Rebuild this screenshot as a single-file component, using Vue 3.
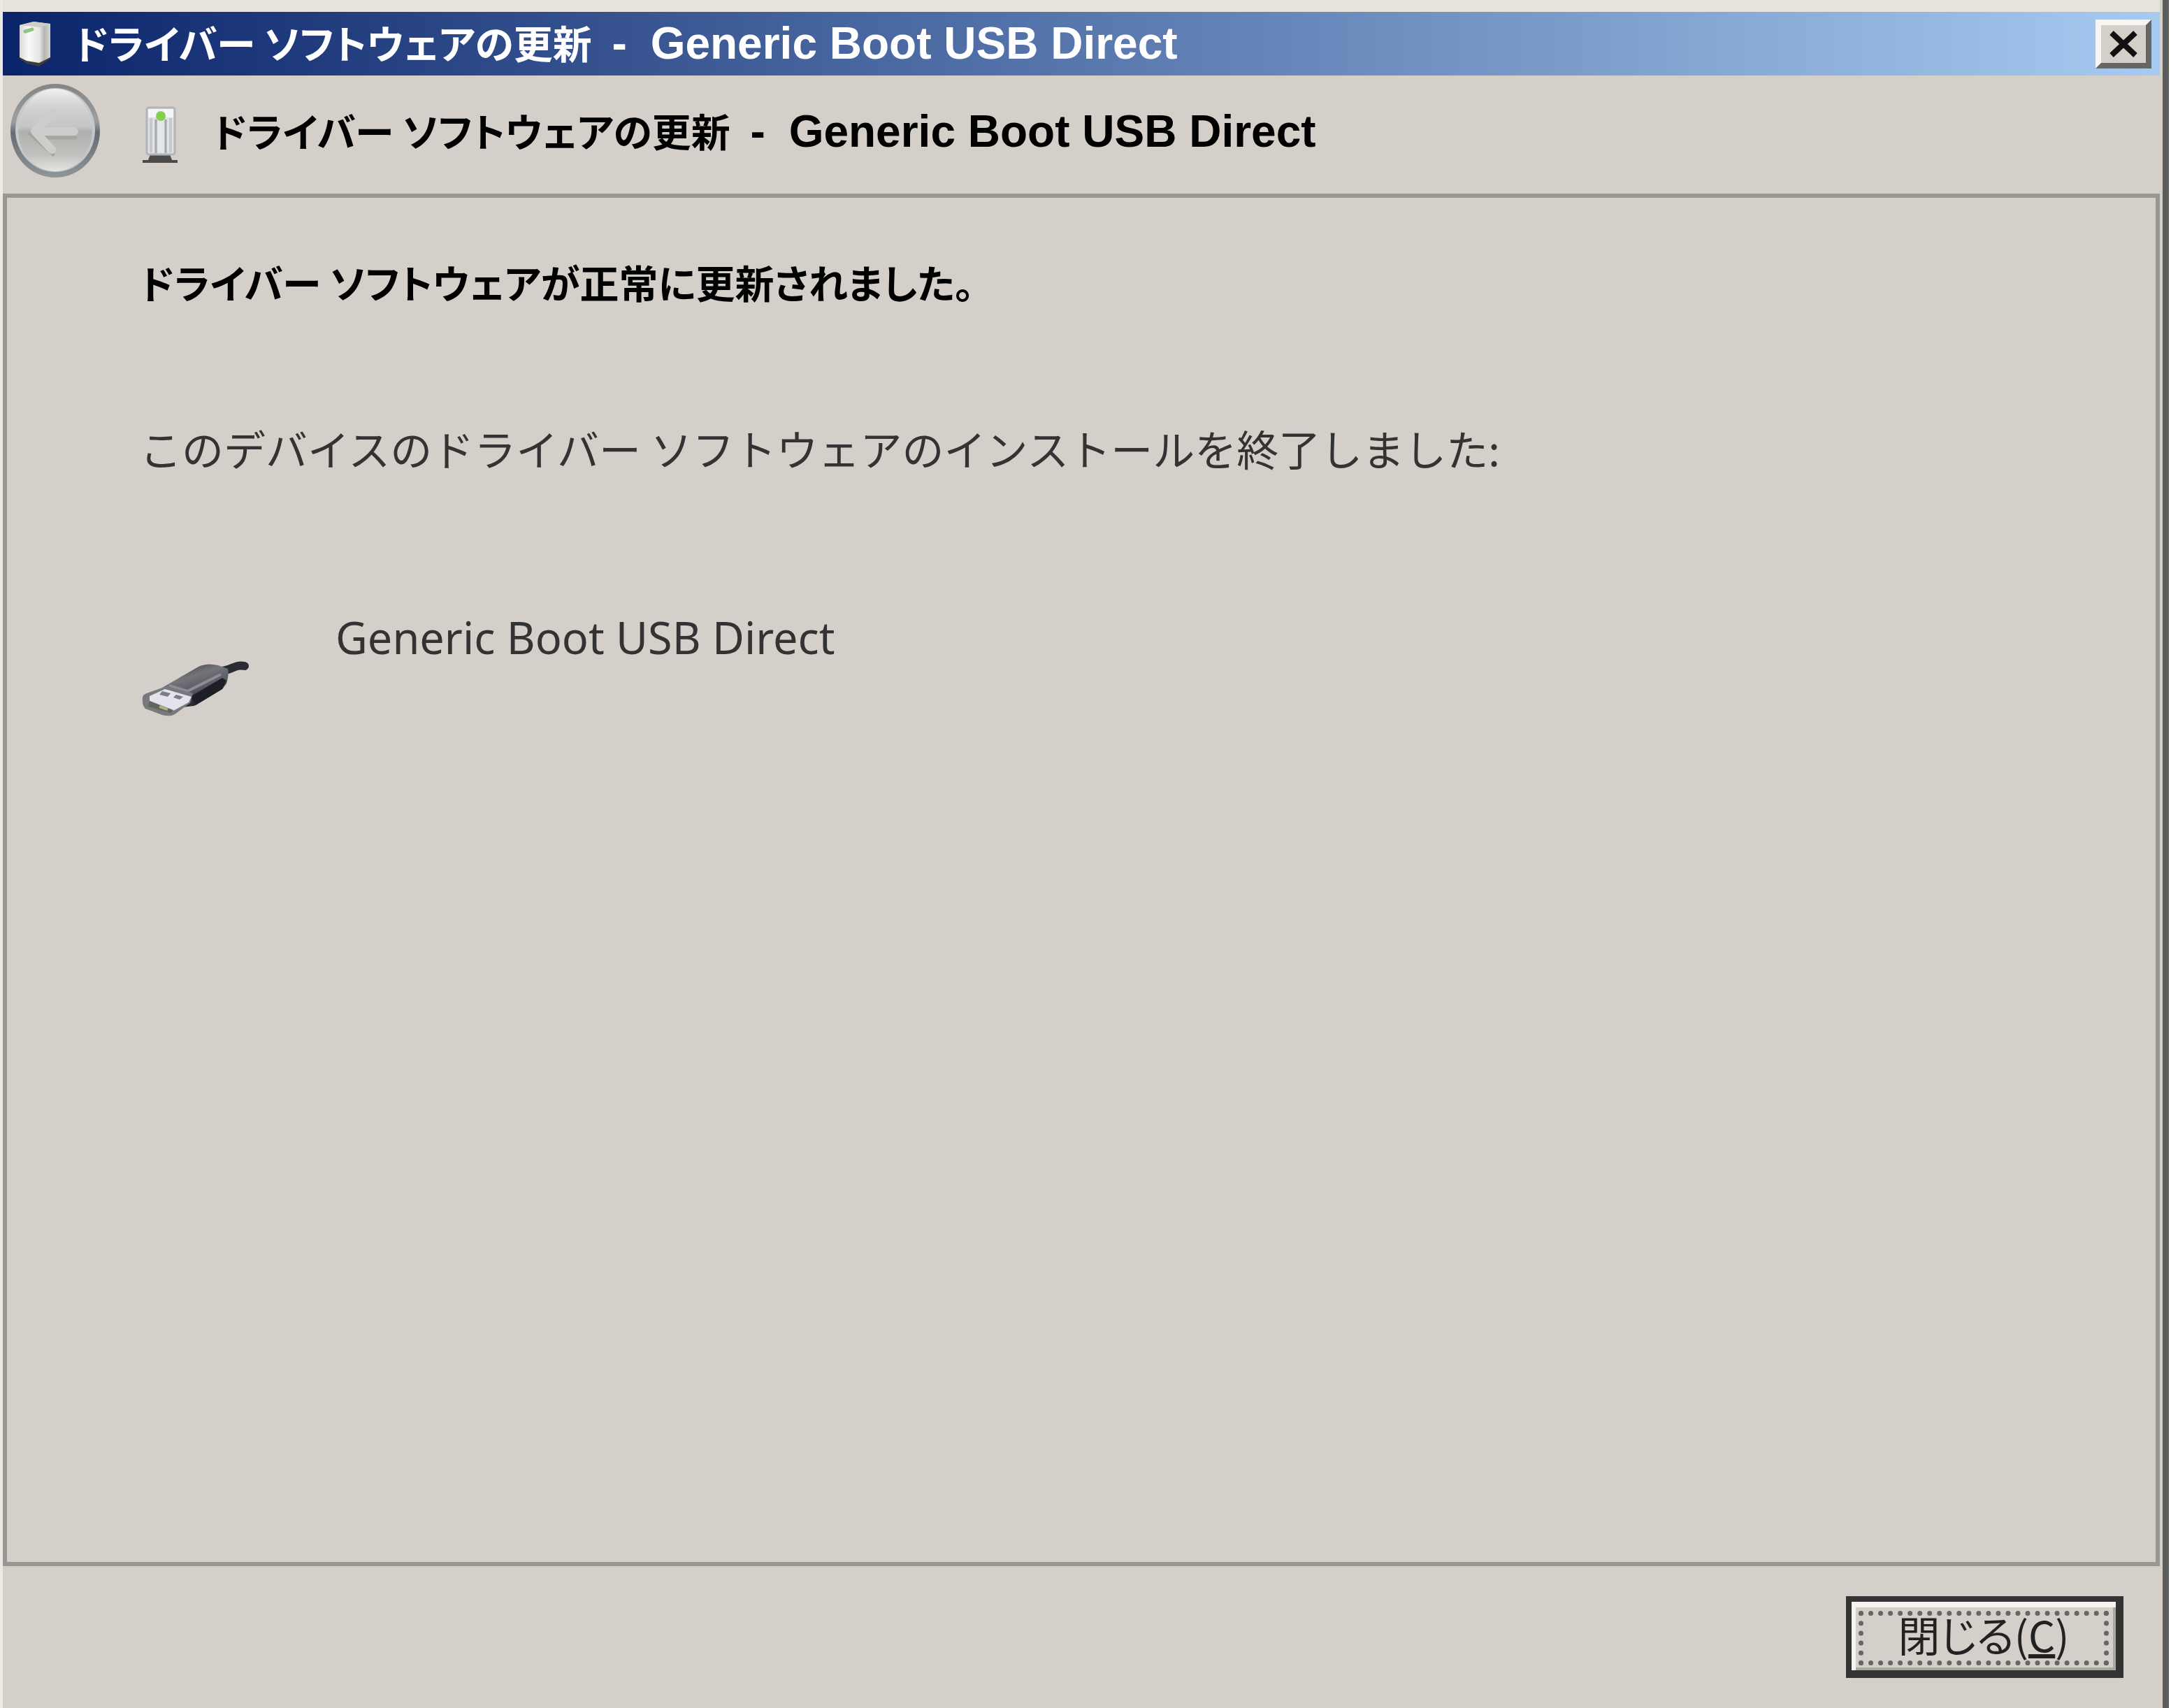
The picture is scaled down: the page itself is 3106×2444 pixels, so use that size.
<template>
  <div class="window">
    <header class="title-bar">
      <svg class="title-icon" viewBox="0 0 48 66" aria-hidden="true">
        <defs>
          <linearGradient id="boxFace" x1="0" x2="1">
            <stop offset="0" stop-color="#d8d8d6" />
            <stop offset="0.3" stop-color="#fafafa" />
            <stop offset="0.65" stop-color="#e4e4e2" />
            <stop offset="0.8" stop-color="#b4b4b2" />
            <stop offset="1" stop-color="#d6d6d4" />
          </linearGradient>
        </defs>
        <path d="M2 54 L12 61 L30 65 L46 54 V50 H2 Z" fill="#3c3c3a" />
        <path d="M2 6 L22 1 L46 4 V52 L30 60 L12 57 L2 52 Z" fill="url(#boxFace)" />
        <path d="M2 6 L22 1 L46 4 L32 9 Z" fill="#cfcdc4" />
        <path d="M10 15 L20 12" stroke="#8fc487" stroke-width="5" stroke-linecap="round" />
      </svg>
      <h1 class="caption">{{ action }} <span class="latin"><span class="dash">-</span> {{ device }}</span></h1>
      <button class="close-box" type="button" aria-label="閉じる">
        <svg viewBox="0 0 44 40" aria-hidden="true">
          <path d="M5 4 L39 36 M39 4 L5 36" />
        </svg>
      </button>
    </header>

    <nav class="wizard-header">
      <button class="back" type="button" aria-label="戻る" disabled>
        <svg viewBox="0 0 136 140" aria-hidden="true">
          <defs>
            <linearGradient id="ring" x1="0" y1="0" x2="0" y2="1">
              <stop offset="0" stop-color="#858583" />
              <stop offset="0.4" stop-color="#9c9fa0" />
              <stop offset="0.52" stop-color="#666d72" />
              <stop offset="1" stop-color="#90959a" />
            </linearGradient>
            <linearGradient id="glass" x1="0" y1="0" x2="0" y2="1">
              <stop offset="0" stop-color="#f0f0f0" />
              <stop offset="0.2" stop-color="#d4d4d2" />
              <stop offset="0.46" stop-color="#c4c6c4" />
              <stop offset="0.52" stop-color="#aeb1ae" />
              <stop offset="0.8" stop-color="#c0c1bd" />
              <stop offset="1" stop-color="#e4e4e2" />
            </linearGradient>
          </defs>
          <ellipse cx="69" cy="70" rx="64" ry="67" fill="url(#ring)" />
          <ellipse cx="69" cy="69" rx="57" ry="60" fill="#c3c8ca" />
          <ellipse cx="69" cy="69" rx="53" ry="59" fill="url(#glass)" />
          <path d="M66 104 L32 74 M44 80 H98" fill="none" stroke="#a4a6a2" stroke-width="5" stroke-linecap="round" />
          <path d="M64 44 L40 71 L64 97 M40 71 H96" fill="none" stroke="#cdcecb" stroke-width="12" stroke-linecap="round" stroke-linejoin="round" />
        </svg>
      </button>
      <svg class="device-icon" viewBox="0 0 54 84" aria-hidden="true">
        <path d="M13 70 H41 L44 78 H52 V82 H2 V78 H10 Z" fill="#4b4b4b" />
        <rect x="8" y="3" width="40" height="67" rx="3" fill="#dfe1e4" stroke="#b2b4b8" stroke-width="3" />
        <rect x="10" y="5" width="36" height="12" fill="#f4f5f6" />
        <path d="M14 18 V67 M42 18 V67" stroke="#c6c9cc" stroke-width="4" />
        <path d="M21 20 V68 M35 20 V68" stroke="#a2a5a9" stroke-width="3" />
        <path d="M28 20 V68" stroke="#e4e6e9" stroke-width="8" />
        <circle cx="28" cy="15" r="7" fill="#86cf4e" />
      </svg>
      <h2 class="caption">{{ action }} <span class="latin"><span class="dash">-</span> {{ device }}</span></h2>
    </nav>

    <main class="page">
      <h3 class="result">ドライバー ソフトウェアが正常に更新されました。</h3>
      <p class="message">このデバイスのドライバー ソフトウェアのインストールを終了しました:</p>
      <div class="device">
        <svg class="usb-icon" viewBox="0 0 160 92" aria-hidden="true">
          <defs>
            <linearGradient id="plugBody" x1="0" y1="0" x2="0.5" y2="1">
              <stop offset="0" stop-color="#2c2c34" />
              <stop offset="0.4" stop-color="#74747a" />
              <stop offset="0.65" stop-color="#5c5c64" />
              <stop offset="1" stop-color="#1c1c24" />
            </linearGradient>
          </defs>
          <path d="M116 20 C130 20 136 10 150 13" fill="none" stroke="#2b2b33" stroke-width="12" stroke-linecap="round" />
          <path d="M32 44 L84 14 Q96 8 112 12 L126 17 Q128 24 124 38 L118 46 L78 70 L60 72 Z" fill="url(#plugBody)" />
          <path d="M72 57 L118 30 L124 34 L118 46 L80 69 Z" fill="#1e1e27" />
          <path d="M42 41 L68 49 L116 25" fill="none" stroke="#8b8c96" stroke-width="4" />
          <path d="M4 58 Q4 54 10 52 L38 42 L76 52 L72 66 L50 82 Q44 86 32 83 L8 74 Q3 70 4 58 Z" fill="#77797e" />
          <path d="M14 56 L36 46 L74 57 L70 65 L48 77 L14 63 Z" fill="#e2e3ec" />
          <path d="M14 63 L48 76 L44 80 L12 71 Z" fill="#63645c" />
          <path d="M32 49 L44 52 L40 57 L28 54 Z M52 54 L62 57 L57 61 L48 58 Z" fill="#7c7d86" />
          <path d="M28 71 L40 75" stroke="#aeb183" stroke-width="4" />
        </svg>
        <span class="device-name">{{ device }}</span>
      </div>
    </main>

    <footer class="actions">
      <button class="close-button" type="button" accesskey="c">
        <span class="focus">閉じる(<u>C</u>)</span>
      </button>
    </footer>
  </div>
</template>

<script setup>
const action = 'ドライバー ソフトウェアの更新';
const device = 'Generic Boot USB Direct';
</script>

<style>
body {
  margin: 0;
  background: #fff;
}
</style>

<style scoped>
.window {
  display: flex;
  flex-direction: column;
  box-sizing: border-box;
  min-height: 100vh;
  margin-right: 3px;
  padding-right: 4px;
  border-left: 4px solid #eceae5;
  border-right: 9px solid #5c5c5a;
  background: #d4cfc8;
  color: #000;
  font-family: 'Liberation Sans', 'Noto Sans CJK JP', sans-serif;
}

h1,
h2,
h3,
p {
  margin: 0;
}

.title-bar {
  display: flex;
  align-items: center;
  height: 91px;
  padding: 0 12px 0 22px;
  border-top: 17px solid #e6e3db;
  background: linear-gradient(to right, #0a246a, #a6caf0) padding-box;
}

.title-icon {
  width: 48px;
  height: 66px;
  margin-right: 32px;
}

.caption {
  font-family: 'Noto Sans CJK JP', sans-serif;
  font-size: 56px;
  font-weight: 700;
  line-height: 80px;
  font-feature-settings: 'palt';
  white-space: nowrap;
}

.latin {
  font-family: 'Liberation Sans', sans-serif;
  font-size: 64px;
}

.dash {
  margin: 0 16px;
}

.title-bar .caption {
  flex: 1;
  padding-bottom: 4px;
  color: #fff;
}

.close-box {
  display: flex;
  align-items: center;
  justify-content: center;
  width: 80px;
  height: 70px;
  padding: 0;
  border: 8px solid;
  border-color: #f8f6f2 #686662 #686662 #f8f6f2;
  background: #d4cfc8;
}

.close-box svg {
  width: 44px;
  height: 40px;
  stroke: #111;
  stroke-width: 8;
}

.wizard-header {
  display: flex;
  align-items: center;
  height: 158px;
  padding: 0 6px 11px;
}

.back {
  width: 136px;
  height: 140px;
  padding: 0;
  border: 0;
  background: none;
}

.back svg {
  display: block;
}

.device-icon {
  width: 54px;
  height: 84px;
  margin: 12px 48px 0 56px;
}

.page {
  flex: 1;
  padding: 80px 190px;
  border: 6px solid #989792;
}

.result {
  font-family: 'Noto Sans CJK JP', sans-serif;
  font-size: 56px;
  font-weight: 700;
  line-height: 80px;
  font-feature-settings: 'palt';
}

.message {
  margin-top: 158px;
  color: #333;
  font-family: 'Noto Sans CJK JP', sans-serif;
  font-size: 60px;
  line-height: 80px;
}

.device {
  display: flex;
  align-items: flex-start;
  margin-top: 191px;
}

.usb-icon {
  width: 160px;
  height: 92px;
  margin: 68px 120px 0 0;
}

.device-name {
  color: #333;
  font-family: 'Noto Sans', sans-serif;
  font-size: 63px;
  line-height: 80px;
}

.actions {
  display: flex;
  justify-content: flex-end;
  padding: 43px 52px;
}

.close-button {
  width: 397px;
  height: 117px;
  padding: 4px;
  border: 8px solid #333;
  border-right-width: 11px;
  border-bottom-width: 11px;
  background: #d4cfc8;
  box-shadow: inset 6px 8px #f6f4ee, inset -4px -4px #aaa8a2;
  color: #222;
}

.focus {
  display: flex;
  justify-content: center;
  box-sizing: border-box;
  height: 78px;
  margin: 6px 6px 0;
  border: 7px dotted #666;
  font-family: 'Noto Sans CJK JP', sans-serif;
  font-size: 60px;
  line-height: 52px;
  font-feature-settings: 'palt';
}
</style>
